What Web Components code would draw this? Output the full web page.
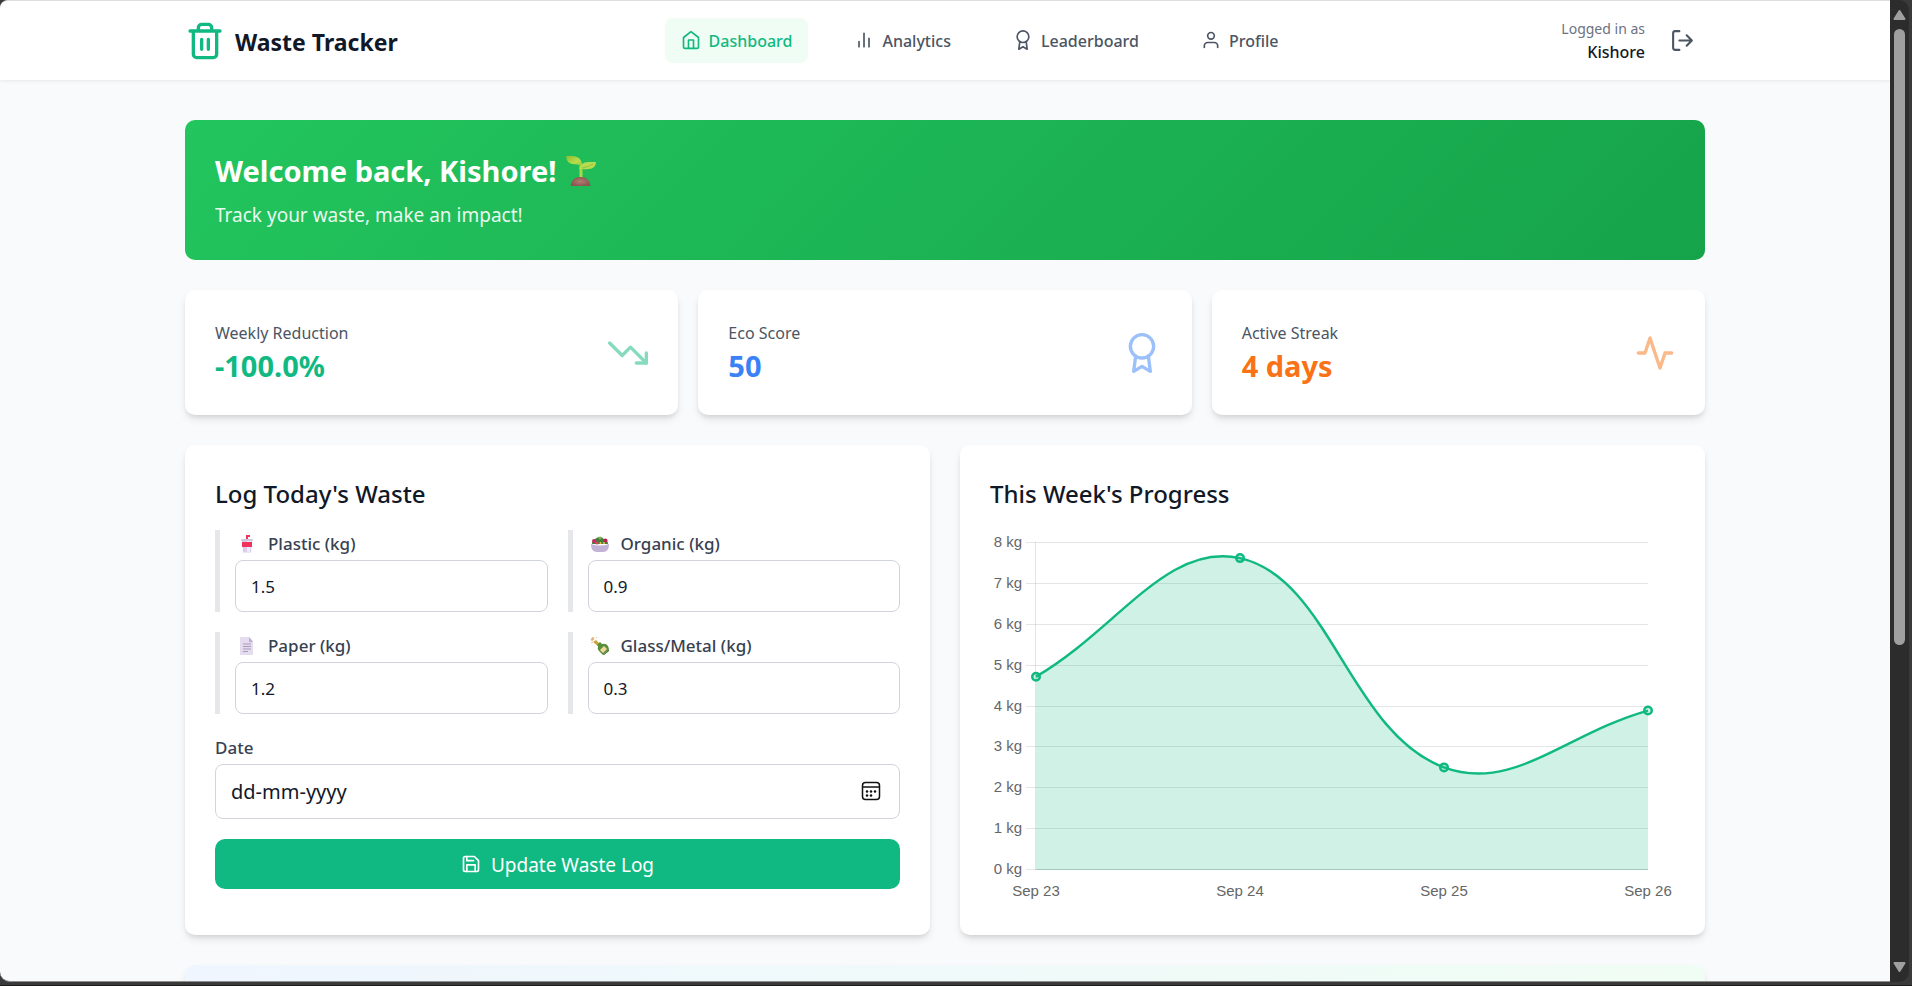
<!DOCTYPE html>
<html lang="en">
<head>
<meta charset="utf-8">
<title>Waste Tracker</title>
<style>
  html, body { height: 100%; }
  body {
    margin: 0;
    background: #3a3a3a;
    color: #111827;
    font-family: "Noto Sans", "Open Sans", sans-serif;
    --brand: #10b981;
    --muted: #4b5563;
    --line: #d1d5db;
    --radius: 10px;
    --card-shadow: 0 5px 8px -1px rgba(0,0,0,.1), 0 3px 5px -2px rgba(0,0,0,.1);
  }
</style>
</head>
<body>
<app-window>
  <app-header user="Kishore">
    <nav-link icon="home" href="#dashboard" active>Dashboard</nav-link>
    <nav-link icon="bars" href="#analytics">Analytics</nav-link>
    <nav-link icon="award" href="#leaderboard">Leaderboard</nav-link>
    <nav-link icon="user" href="#profile">Profile</nav-link>
  </app-header>
  <dashboard-page>
    <welcome-banner name="Kishore">Track your waste, make an impact!</welcome-banner>
    <card-row columns="3">
      <stat-card label="Weekly Reduction" icon="down" style="--accent:#10b981">-100.0%</stat-card>
      <stat-card label="Eco Score" icon="award" style="--accent:#3b82f6">50</stat-card>
      <stat-card label="Active Streak" icon="pulse" style="--accent:#f97316">4 days</stat-card>
    </card-row>
    <card-row columns="2" wide>
      <panel-card heading="Log Today's Waste"><waste-form></waste-form></panel-card>
      <panel-card heading="This Week's Progress"><week-chart></week-chart></panel-card>
    </card-row>
    <insight-card></insight-card>
  </dashboard-page>
</app-window>

<script>
const ICONS = {
  trash: '<path d="M3 6h18M19 6v14a2 2 0 0 1-2 2H7a2 2 0 0 1-2-2V6M8 6V4a2 2 0 0 1 2-2h4a2 2 0 0 1 2 2v2M10 11v6M14 11v6"/>',
  home: '<path d="M3 9l9-7 9 7v11a2 2 0 0 1-2 2H5a2 2 0 0 1-2-2z"/><path d="M9 22V12h6v10"/>',
  bars: '<path d="M18 20V10M12 20V4M6 20v-6"/>',
  award: '<circle cx="12" cy="8" r="7"/><path d="M8.21 13.89L7 23l5-3 5 3-1.21-9.12"/>',
  user: '<path d="M20 21v-2a4 4 0 0 0-4-4H8a4 4 0 0 0-4 4v2"/><circle cx="12" cy="7" r="4"/>',
  logout: '<path d="M9 21H5a2 2 0 0 1-2-2V5a2 2 0 0 1 2-2h4M16 17l5-5-5-5M21 12H9"/>',
  down: '<path d="M23 18l-9.5-9.5-5 5L1 6"/><path d="M17 18h6v-6"/>',
  pulse: '<path d="M22 12h-4l-3 9L9 3l-3 9H2"/>',
  save: '<path d="M19 21H5a2 2 0 0 1-2-2V5a2 2 0 0 1 2-2h11l5 5v11a2 2 0 0 1-2 2z"/><path d="M17 21v-8H7v8M7 3v5h8"/>'
};
const icon = (name, size) =>
  `<svg width="${size}" height="${size}" viewBox="0 0 24 24" fill="none" stroke="currentColor" stroke-width="2" stroke-linecap="round" stroke-linejoin="round" aria-hidden="true">${ICONS[name]}</svg>`;

const PICTURES = {
  seedling: `<svg width="30" height="30" viewBox="0 0 30 30" role="img" aria-label="Seedling">
    <defs><linearGradient id="leaf" x1="0" x2="1" y1="0" y2="1"><stop offset="0" stop-color="#8fbb2e"/><stop offset=".6" stop-color="#b8dd4c"/><stop offset="1" stop-color="#8cc63f"/></linearGradient>
    <radialGradient id="soil"><stop offset="0" stop-color="#b27c72"/><stop offset="1" stop-color="#8a5751"/></radialGradient></defs>
    <path d="M13.500 22V9h3v13z" fill="#a6d94b"/>
    <path d="M0 0h6q8 0 10 7v3q-5-2-9-2Q1 8 0 0z" fill="url(#leaf)"/>
    <path d="M30 6h-8q-7 0-9 7h3q9 1 12-2 2-2 2-5z" fill="#b5dc4f"/>
    <path d="M16 12q7-1 11-4" fill="none" stroke="#93c440"/>
    <path d="M4.500 30q1-9 10-9t10 9z" fill="url(#soil)"/></svg>`,
  cup: `<svg width="24" height="18" viewBox="0 0 24 18" aria-hidden="true">
    <path d="M12 5V1h3" fill="none" stroke="#f0325c" stroke-width="2"/>
    <path d="M7 5h10l-1 12.500H8z" fill="#d9cdea"/><path d="M12 5h4l-1 12.500h-3z" fill="#f1e8fb"/>
    <path d="M7 7h10v5H7z" fill="#f2305e"/><rect x="6" y="4" width="12" height="2" rx="1" fill="#cfc6dc"/></svg>`,
  salad: `<svg width="24" height="18" viewBox="0 0 24 18" aria-hidden="true">
    <path d="M4 9q0-4 3-5 5-4 9 0 4 1 4 5z" fill="#477c3c"/>
    <circle cx="6" cy="6" r="2" fill="#c52b5e"/><circle cx="17.500" cy="5.500" r="2" fill="#b92056"/>
    <circle cx="9" cy="8" r="1.500" fill="#e04162"/><circle cx="12" cy="3" r="1.500" fill="#78b644"/>
    <circle cx="12.500" cy="8" r="1" fill="#f1c644"/><circle cx="16" cy="8" r="1" fill="#f1c644"/>
    <path d="M3 9q9 3 18 0 0 8-6 8H9q-6 0-6-8z" fill="#c2b3d6"/></svg>`,
  paper: `<svg width="24" height="18" viewBox="0 0 24 18" aria-hidden="true">
    <path d="M5 0h9l4 4v14H5z" fill="#e6dcf0"/><path d="M14 0l4 5h-4z" fill="#bcb0ca"/>
    <path d="M8 7h8M8 9.500h8M8 12h8M8 14.500h5" stroke="#a79bb8"/></svg>`,
  bottle: `<svg width="24" height="18" viewBox="0 0 24 18" aria-hidden="true">
    <path d="M3 2l2-2 1 2-2 2zM8 0l1 1M3 6l2-1" fill="#e0a977" stroke="#e9c48f"/>
    <path d="M5 5l3-2 5 5-2 2z" fill="#c9a544"/>
    <path d="M9 8l3-3 2 2q4-1 6 2l1 3-6 6-4-4q-2-2-1-5z" fill="#57903a"/>
    <path d="M15 18l6-6v2l-5 4z" fill="#3e6e30"/><path d="M12 13l4-4 3 3-4 4z" fill="#f3d69b"/></svg>`
};

/* Base class: renders the subclass's markup into an open shadow root. */
class View extends HTMLElement {
  connectedCallback() {
    if (this.shadowRoot) return;
    this.attachShadow({ mode: 'open' }).innerHTML =
      `<style>*{box-sizing:border-box}svg{display:block;flex:none}${this.css()}</style>${this.html()}`;
    this.ready();
  }
  css() { return ':host{display:block}'; }
  html() { return '<slot></slot>'; }
  ready() {}
}
const attr = (el, n) => el.getAttribute(n) || '';

customElements.define('app-window', class extends View {
  css() { return `
    :host{display:grid;grid-template-columns:minmax(0,1fr) auto;height:100vh;overflow:hidden;
      padding:0 3px 3px 0;box-sizing:border-box;border-bottom:1px solid #1c1c1c}
    .view{overflow:hidden;background:#f9fafc;border-top:1px solid #dedede;
      border-bottom:1px solid #8e8e8e;border-radius:8px 0 0 10px}`; }
  html() { return '<div class="view"><slot></slot></div><scroll-rail></scroll-rail>'; }
});

customElements.define('scroll-rail', class extends View {
  css() { return `
    :host{display:flex;flex-direction:column;align-items:center;width:19px;padding:10px 0;box-sizing:border-box;
      background:#2c2c2c;border-radius:0 10px 10px 0}
    .track{display:grid;grid-template-rows:2fr 1fr;flex:1;width:11px;margin:9px 0}
    .thumb{background:#9f9f9f;border-radius:6px}`; }
  html() {
    const tri = d => `<svg width="13" height="10" viewBox="0 0 12 10" aria-hidden="true"><path d="${d}" fill="#9f9f9f" stroke="#9f9f9f" stroke-width="2" stroke-linejoin="round"/></svg>`;
    return tri('M6 1l5 8H1z') + '<div class="track"><div class="thumb"></div></div>' + tri('M6 9l5-8H1z');
  }
});

customElements.define('app-header', class extends View {
  css() { return `
    :host{display:block;background:#fff;box-shadow:0 1px 3px rgba(0,0,0,.08)}
    header{display:flex;align-items:center;justify-content:space-between;height:79px;
      max-width:1520px;margin:0 auto}
    .brand{display:flex;align-items:center;gap:10px;color:inherit;text-decoration:none;
      font-size:23px;font-weight:700;line-height:40px}
    .brand svg{color:var(--brand)}
    .brand span{padding-top:2px}
    nav{display:flex;gap:30px}
    .account{display:flex;align-items:center;gap:15px}
    .who{text-align:right}
    .who span{display:block;font-size:14px;line-height:22px;color:#6b7280}
    .who strong{display:block;font-size:16px;font-weight:500;line-height:24px}
    button{display:block;padding:10px;border:0;background:none;color:var(--muted)}`; }
  html() { return `<header>
    <a class="brand" href="#home">${icon('trash', 40)}<span>Waste Tracker</span></a>
    <nav aria-label="Main"><slot></slot></nav>
    <div class="account"><div class="who"><span>Logged in as</span><strong>${attr(this, 'user')}</strong></div>
    <button type="button" aria-label="Log out">${icon('logout', 25)}</button></div></header>`; }
});

customElements.define('nav-link', class extends View {
  css() { return `
    :host{display:block}
    a{display:flex;align-items:center;gap:8px;height:45px;padding:2px 16px 0;border-radius:8px;
      color:var(--muted);font-size:16px;font-weight:500;line-height:25px;text-decoration:none}
    svg{margin-bottom:4px}
    :host([active]) a{background:#f0fdf4;color:var(--brand)}`; }
  html() { return `<a href="${attr(this, 'href')}">${icon(attr(this, 'icon'), 20)}<slot></slot></a>`; }
});

customElements.define('dashboard-page', class extends View {
  css() { return `
    :host{display:block}
    main{display:flex;flex-direction:column;gap:30px;max-width:1520px;margin:0 auto;padding:40px 0}`; }
  html() { return '<main><slot></slot></main>'; }
});

customElements.define('welcome-banner', class extends View {
  css() { return `
    :host{display:block;padding:30px;border-radius:var(--radius);color:#fff;
      background:linear-gradient(135deg,#22c55e,#16a34a)}
    h1{display:flex;align-items:center;gap:10px;margin:0 0 8px;font-size:29px;font-weight:700;line-height:42px}
    p{margin:0;font-size:19px;line-height:30px;opacity:.9}`; }
  html() { return `<h1>Welcome back, ${attr(this, 'name')}! ${PICTURES.seedling}</h1><p><slot></slot></p>`; }
});

customElements.define('card-row', class extends View {
  css() { return `
    :host{display:grid;gap:20px;grid-template-columns:repeat(${attr(this, 'columns')},minmax(0,1fr))}
    :host([wide]){gap:30px}`; }
});

customElements.define('stat-card', class extends View {
  css() { return `
    :host{display:flex;align-items:center;justify-content:space-between;padding:29px 30px;
      background:#fff;border-radius:var(--radius);box-shadow:var(--card-shadow)}
    div{padding-top:2px}
    p{margin:0;font-size:16px;line-height:25px;color:var(--muted)}
    .value{font-size:29px;font-weight:700;line-height:40px;color:var(--accent)}
    svg{color:var(--accent);opacity:.5}`; }
  html() { return `<div><p>${attr(this, 'label')}</p><p class="value"><slot></slot></p></div>${icon(attr(this, 'icon'), 40)}`; }
});

customElements.define('panel-card', class extends View {
  css() { return `
    :host{display:block;padding:30px;background:#fff;border-radius:var(--radius);box-shadow:var(--card-shadow)}
    h2{margin:0 0 18px;font-size:24px;font-weight:500;line-height:37px}`; }
  html() { return `<h2>${attr(this, 'heading')}</h2><slot></slot>`; }
});

customElements.define('waste-form', class extends View {
  css() { return `
    :host{display:block}
    form{display:flex;flex-direction:column;gap:20px}
    .grid{display:grid;grid-template-columns:repeat(2,minmax(0,1fr));gap:20px}
    .field{padding-left:15px;border-left:5px solid #e5e7eb}
    label{display:flex;align-items:center;gap:9px;margin-bottom:3px;
      font-size:17px;font-weight:500;line-height:27px;color:#374151}
    input{display:block;width:100%;height:52px;padding:0 15px;border:1px solid var(--line);border-radius:8px;
      background:#fff;color:#111827;font-family:inherit;font-size:17px}
    .date{position:relative}
    .date input{height:55px;font-size:20px}
    .date input::placeholder{color:#111827;opacity:1}
    .date button{position:absolute;top:17px;right:19px;padding:0;border:0;background:none}
    .submit{display:flex;align-items:center;justify-content:center;gap:10px;height:50px;padding:2px 0 0;border:0;
      border-radius:var(--radius);background:var(--brand);color:#fff;font-family:inherit;font-size:19px;line-height:30px}
    .submit svg{margin-bottom:2px}`; }
  field(id, pic, text, value) { return `<div class="field"><label for="${id}">${PICTURES[pic]}${text}</label>
    <input id="${id}" inputmode="decimal" value="${value}"></div>`; }
  html() { return `<form>
    <div class="grid">
      ${this.field('plastic', 'cup', 'Plastic (kg)', '1.5')}
      ${this.field('organic', 'salad', 'Organic (kg)', '0.9')}
      ${this.field('paper', 'paper', 'Paper (kg)', '1.2')}
      ${this.field('glass', 'bottle', 'Glass/Metal (kg)', '0.3')}
    </div>
    <div><label for="date">Date</label>
      <div class="date"><input id="date" placeholder="dd-mm-yyyy">
      <button type="button" aria-label="Choose date"><svg width="20" height="20" viewBox="0 0 20 20" fill="none" stroke="#111" stroke-width="1.500"><rect x="1.500" y="1.500" width="17" height="17" rx="3"/><path d="M2 6h16"/><g fill="#111" stroke="none"><circle cx="6" cy="10.500" r="1.250"/><circle cx="10" cy="10.500" r="1.250"/><circle cx="14" cy="10.500" r="1.250"/><circle cx="6" cy="14.500" r="1.250"/><circle cx="10" cy="14.500" r="1.250"/></g></svg></button></div></div>
    <button class="submit" type="button">${icon('save', 20)}Update Waste Log</button>
  </form>`; }
});

/* Line chart with a filled area and a smoothed curve; redrawn when its width changes. */
customElements.define('week-chart', class extends View {
  css() { return `
    :host{display:block;height:375px}
    svg{width:100%;height:100%}
    text{font:15px "Liberation Sans",Arial,sans-serif;fill:#666}`; }
  html() { return '<svg role="img" aria-label="Waste per day in kilograms"></svg>'; }
  ready() {
    this.draw();
    new ResizeObserver(() => this.draw()).observe(this);
  }
  draw() {
    const data = [['Sep 23', 4.73], ['Sep 24', 7.63], ['Sep 25', 2.51], ['Sep 26', 3.9]];
    const left = 46, right = this.clientWidth - 27, top = 13, bottom = 340, max = 8;
    const y = v => bottom - (bottom - top) * v / max;
    const pts = data.map((d, i) => [left + (right - left) * i / (data.length - 1), y(d[1])]);
    let out = '';
    for (let v = 0; v <= max; v++) {
      const gy = Math.round(y(v)) - .5;
      out += `<path d="M${left - 10} ${gy}H${right}" stroke="rgba(0,0,0,.1)"/><text x="32" y="${Math.round(y(v)) + 4}" text-anchor="end">${v} kg</text>`;
    }
    out += `<path d="M${left - .5} ${top - 1}V${bottom}" stroke="rgba(0,0,0,.1)"/>`;
    out += `<path d="M${left} ${bottom - .5}H${right}" stroke="rgba(0,0,0,.1)"/>`;
    const tension = .4, dist = (a, b) => Math.hypot(a[0] - b[0], a[1] - b[1]);
    const ctrl = pts.map((p, i) => {
      const a = pts[i - 1] || p, b = pts[i + 1] || p, d1 = dist(a, p), d2 = dist(p, b), s = d1 + d2;
      return [[p[0] - tension * d1 / s * (b[0] - a[0]), p[1] - tension * d1 / s * (b[1] - a[1])],
              [p[0] + tension * d2 / s * (b[0] - a[0]), p[1] + tension * d2 / s * (b[1] - a[1])]];
    });
    let curve = `M${pts[0]}`;
    for (let i = 1; i < pts.length; i++) curve += `C${ctrl[i - 1][1]} ${ctrl[i][0]} ${pts[i]}`;
    out += `<path d="${curve}L${right} ${bottom}L${left} ${bottom}Z" fill="#10b981" fill-opacity=".2"/>`;
    out += `<path d="${curve}" fill="none" stroke="#10b981" stroke-width="2.500"/>`;
    pts.forEach((p, i) => {
      out += `<circle cx="${p[0]}" cy="${p[1]}" r="3.750" fill="#10b981" fill-opacity=".2" stroke="#10b981" stroke-width="2.500"/>`;
      out += `<text x="${p[0]}" y="366" text-anchor="middle">${data[i][0]}</text>`;
    });
    this.shadowRoot.querySelector('svg').innerHTML = out;
  }
});

customElements.define('insight-card', class extends View {
  css() { return `
    :host{display:block;min-height:150px;border-radius:var(--radius);box-shadow:var(--card-shadow);
      background:linear-gradient(to right,#eff6ff,#f0fdf4)}`; }
});
</script>
</body>
</html>
